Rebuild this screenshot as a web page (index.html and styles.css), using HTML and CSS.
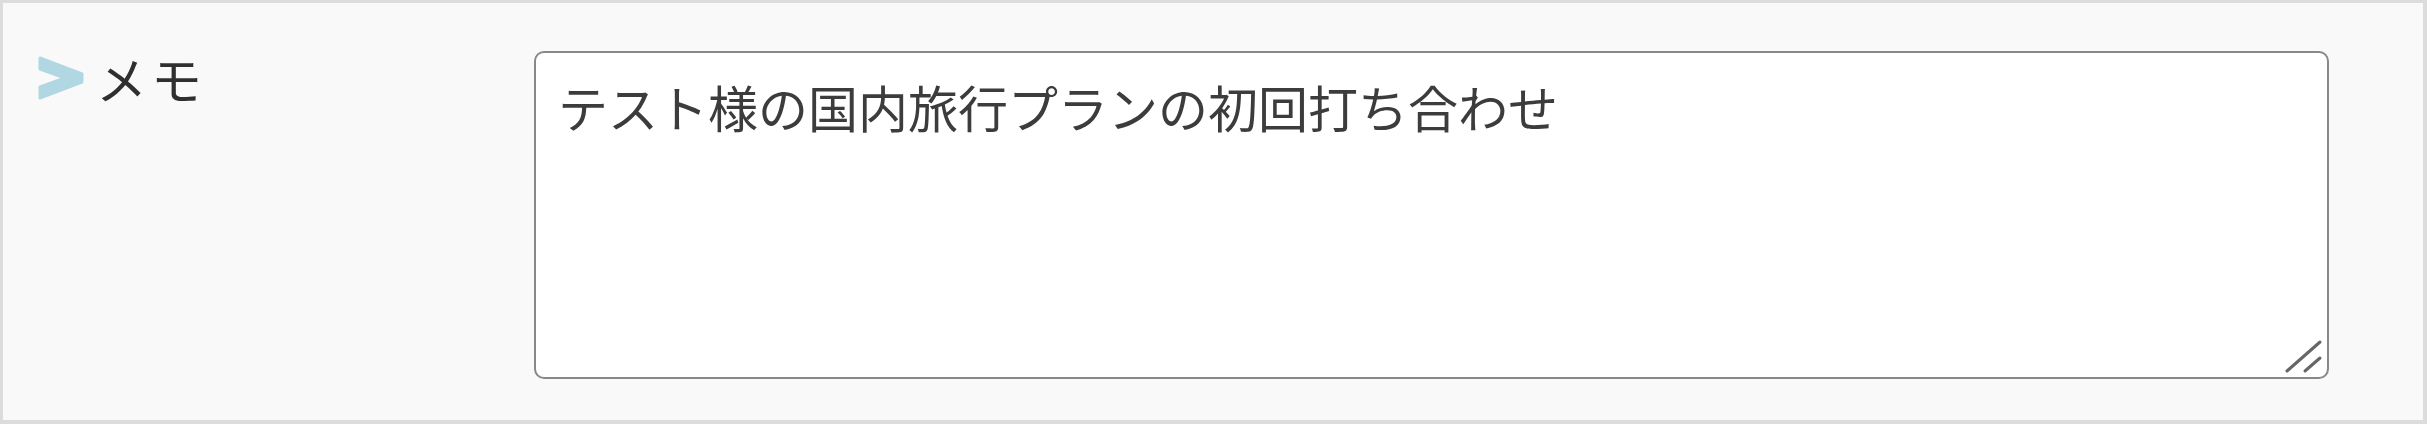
FILE: index.html
```html
<!DOCTYPE html>
<html lang="ja">
<head>
<meta charset="utf-8">
<title>メモ</title>
<link rel="stylesheet" href="styles.css">
</head>
<body>
<div class="form-row">
  <div class="label">
    <svg class="chev" viewBox="0 0 46 44" width="46" height="44" aria-hidden="true">
      <polygon points="2,2 44,18 44,26 2,42 2,31 27,22 2,13" fill="#b1d7e3" stroke="#b1d7e3" stroke-width="3" stroke-linejoin="round"/>
    </svg>
    <span class="label-text">メモ</span>
  </div>
  <div class="field">
    <textarea class="memo">テスト様の国内旅行プランの初回打ち合わせ</textarea>
    <svg class="grip" viewBox="0 0 40 36" width="40" height="36" aria-hidden="true">
      <line x1="3" y1="33" x2="36" y2="4" stroke="#666" stroke-width="3" stroke-linecap="round"/>
      <line x1="21" y1="33" x2="36" y2="20" stroke="#666" stroke-width="3" stroke-linecap="round"/>
    </svg>
  </div>
</div>
</body>
</html>
```

FILE: styles.css
```css
html, body {
  margin: 0;
  padding: 0;
  background: #ffffff;
}

.form-row {
  box-sizing: border-box;
  width: 2427px;
  height: 424px;
  border: 3px solid #dcdcdc;
  border-bottom-width: 4px;
  border-right-width: 4px;
  background: #f9f9f9;
  display: flex;
  align-items: flex-start;
  padding: 48px 0 0 35px;
  font-family: "Noto Sans CJK JP", sans-serif;
  color: #333333;
}

.label {
  width: 496px;
  display: flex;
  align-items: flex-start;
  gap: 12px;
}

.chev {
  display: block;
  margin-top: 5px;
}

.label-text {
  font-size: 51px;
  line-height: 54px;
  letter-spacing: 4px;
  color: #2f2f2f;
}

.field {
  position: relative;
}

.memo {
  display: block;
  box-sizing: border-box;
  width: 1795px;
  height: 328px;
  margin: 0;
  border: 2px solid #888888;
  border-radius: 10px;
  background: #ffffff;
  padding: 18px 22px;
  font-family: "Noto Sans CJK JP", sans-serif;
  font-size: 50px;
  line-height: 70px;
  color: #3c3c3c;
  resize: none;
  outline: none;
}

.grip {
  position: absolute;
  right: 5px;
  bottom: 5px;
}
```
